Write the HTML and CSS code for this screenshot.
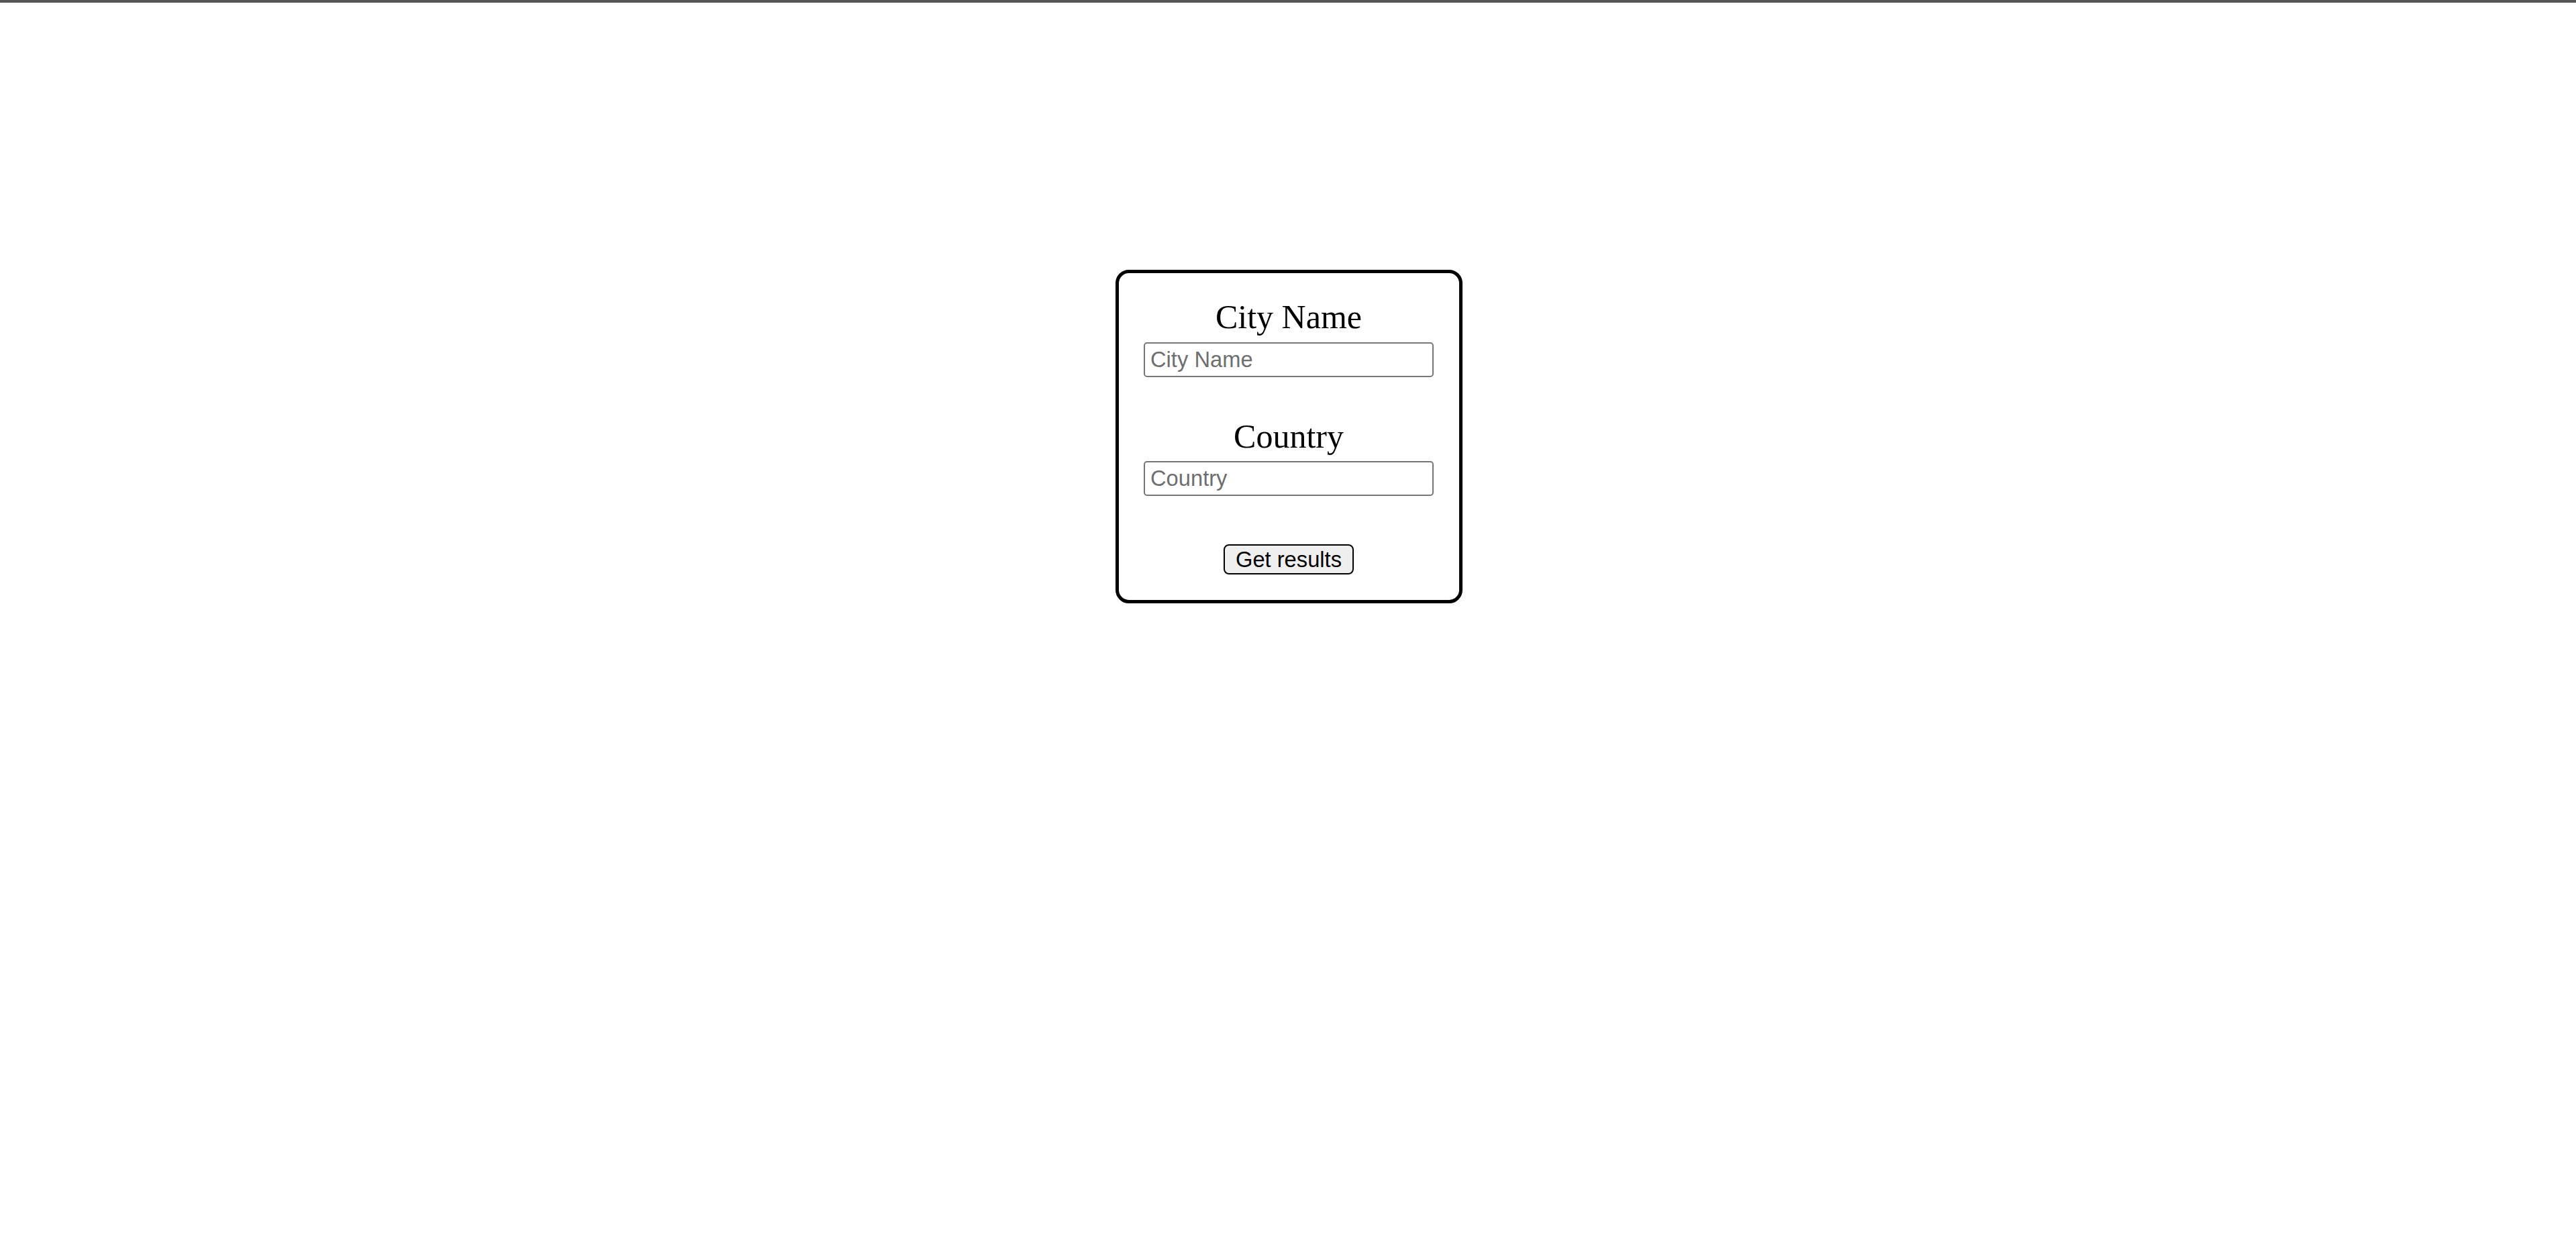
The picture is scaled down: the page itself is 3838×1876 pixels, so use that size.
FILE: index.html
```html
<!DOCTYPE html>
<html lang="en">
<head>
<meta charset="utf-8">
<title>Weather</title>
<link rel="stylesheet" href="styles.css">
</head>
<body>
<div class="topbar"></div>
<form class="card">
  <label class="label" for="city">City Name</label>
  <input class="field field-city" id="city" type="text" placeholder="City Name">
  <label class="label label-country" for="country">Country</label>
  <input class="field field-country" id="country" type="text" placeholder="Country">
  <button class="submit" type="button">Get results</button>
</form>
</body>
</html>
```

FILE: styles.css
```css
html, body {
  margin: 0;
  padding: 0;
  background: #ffffff;
}

.topbar {
  height: 4px;
  background: #555555;
}

.card {
  box-sizing: border-box;
  width: 517px;
  height: 497px;
  margin: 398px auto 0;
  border: 5px solid #000000;
  border-radius: 20px;
  padding: 37px 0 0;
  display: flex;
  flex-direction: column;
  align-items: center;
  transform: translateX(1px);
}

.label {
  display: block;
  font-family: "Liberation Serif", "Times New Roman", serif;
  font-size: 50px;
  line-height: 56px;
  color: #000000;
  text-align: center;
}

.label-country {
  margin-top: 60px;
}

.field {
  box-sizing: border-box;
  width: 432px;
  height: 52px;
  border: 2px solid #767676;
  border-radius: 5px;
  padding: 0 8px;
  font-family: "Liberation Sans", Arial, sans-serif;
  font-size: 32.7px;
  color: #000000;
  background: #ffffff;
  outline: none;
}

.field::placeholder {
  color: #6f6f6f;
}

.field-city {
  margin-top: 10px;
}

.field-country {
  margin-top: 9px;
}

.submit {
  box-sizing: border-box;
  margin-top: 72px;
  height: 45px;
  width: 194px;
  padding: 0;
  border: 2px solid #000000;
  border-radius: 8px;
  background: #efefef;
  font-family: "Liberation Sans", Arial, sans-serif;
  font-size: 32.7px;
  color: #000000;
  line-height: 41px;
}
```
